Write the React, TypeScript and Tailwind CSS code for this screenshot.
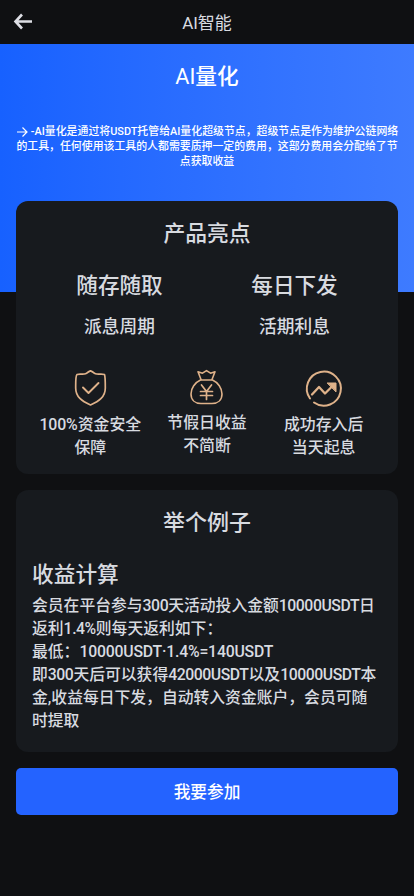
import type { ReactNode } from "react";

const highlights = [
  { title: "随存随取", sub: "派息周期" },
  { title: "每日下发", sub: "活期利息" },
];

// Latin letters and digits sit a little tighter than the Chinese text
function N({ children }: { children: ReactNode }) {
  return <span className="tracking-[-0.45px]">{children}</span>;
}

function ShieldIcon() {
  return (
    <svg width="42" height="44" viewBox="0 0 42 44" fill="none" stroke="#dfb28a" strokeWidth="1.7" strokeLinecap="round" strokeLinejoin="round">
      <path d="M21.500 4.800c-1.800.4-3 2.200-5 3-2.500 1-5.500-.2-8.500.7-1.500 1.500-1.300 5.500-1.300 13.500 0 9 6.300 13.200 14.800 17 8.500-3.800 14.800-8 14.800-17 0-8-.2-12-.8-13.500-3.500-.9-6.500.3-9-.7-2-.8-3.200-2.600-5-3Z" />
      <path d="m14 21.500 5.500 5.500 10-10" strokeWidth="1.9" />
    </svg>
  );
}

function MoneyBagIcon() {
  return (
    <svg width="42" height="44" viewBox="0 0 42 44" fill="none" stroke="#dfb28a" strokeWidth="1.6" strokeLinecap="round" strokeLinejoin="round">
      <path d="m15 13.500-3-7.700 4.500 1.400 4-2.600 4 2.600L29 5.800l-3 7.700" />
      <path d="M14.500 14h12C32 16.500 36 22 36 28c0 6-4 9.500-10 9.500H15c-6 0-10-3.500-10-9.500 0-6 4-11.500 9.500-14Z" />
      <path d="m15.500 19 5 6.500 5-6.500M20.500 25.500v8M14.500 25.500h12M14.500 29.500h12" strokeWidth="1.7" />
    </svg>
  );
}

function TrendIcon() {
  return (
    <svg width="44" height="44" viewBox="0 0 44 44" fill="none" stroke="#dfb28a" strokeWidth="2" strokeLinecap="round" strokeLinejoin="round">
      <path d="M8 32.500A17 17 0 1 1 12 36.500" />
      <path d="m10 28.500 7-7.500 6 6.500 8-8" strokeWidth="2.3" />
      <path d="M25.500 17H34v8.500Z" fill="#dfb28a" strokeWidth="1" />
    </svg>
  );
}

export default function App() {
  return (
    <main className="min-h-[896px] bg-[#0f1012] font-[Roboto,'Noto_Sans_CJK_SC',sans-serif] font-medium text-[#d8dbe0]">
      <header className="grid h-11 grid-cols-[44px_1fr_44px] items-center">
        <svg className="ml-3" width="22" height="22" viewBox="0 0 22 22" fill="none" stroke="#dedfe5" strokeWidth="2.6">
          <path d="m10 3.500-6.500 7 6.500 7M3.500 10.500H20" />
        </svg>
        <h1 className="pt-1 text-center text-[17px] font-normal">AI智能</h1>
      </header>

      <section className="h-[248px] bg-linear-to-r from-[#1761ff] to-[#3e7bff] pt-[17px] text-center text-white">
        <h2 className="text-[21.7px] leading-8"><span className="font-normal">AI</span>量化</h2>
        <div className="mt-[31px] text-[10.9px] leading-[15px] whitespace-nowrap">
          <p>
            <svg className="mr-0.5 inline-block align-[-3px]" width="13" height="12" viewBox="0 0 13 12" fill="none" stroke="currentColor" strokeWidth="1.2">
              <path d="M1 6h10M6.500 1.500 11 6l-4.500 4.500" />
            </svg>
            -AI量化是通过将USDT托管给AI量化超级节点，超级节点是作为维护公链网络
          </p>
          <p>的工具，任何使用该工具的人都需要质押一定的费用，这部分费用会分配给了节</p>
          <p>点获取收益</p>
        </div>
      </section>

      <div className="-mt-[91px] px-4">
        <section className="h-[273px] rounded-xl bg-[#171a1e] pt-[17px] text-center">
          <h2 className="text-[21.8px] leading-8">产品亮点</h2>
          <div className="mt-5 grid grid-cols-2 px-4">
            {highlights.map((item) => (
              <div key={item.title}>
                <p className="text-[21.6px] leading-8">{item.title}</p>
                <p className="mt-[11px] text-[17.7px] leading-7">{item.sub}</p>
              </div>
            ))}
          </div>
          <div className="mt-[25px] grid grid-cols-3 px-4 text-[15.9px] leading-[23px]">
            <div className="flex flex-col items-center">
              <ShieldIcon />
              <p className="mt-[3px]"><span className="tracking-[-0.15px]">100%</span>资金安全<br />保障</p>
            </div>
            <div className="flex flex-col items-center">
              <MoneyBagIcon />
              <p className="mt-px">节假日收益<br />不简断</p>
            </div>
            <div className="flex flex-col items-center">
              <TrendIcon />
              <p className="mt-[3px]">成功存入后<br />当天起息</p>
            </div>
          </div>
        </section>

        <section className="mt-4 h-[262px] rounded-xl bg-[#171a1e] px-4 pt-[17px]">
          <h2 className="text-center text-[22px] leading-8">举个例子</h2>
          <h3 className="mt-5 text-[21.7px] leading-8">收益计算</h3>
          <div className="mt-[3px] text-[15.8px] leading-[23px] whitespace-nowrap">
            <p>会员在平台参与<N>300</N>天活动投入金额<N>10000USDT</N>日</p>
            <p>返利<N>1.4%</N>则每天返利如下：</p>
            <p>最低：<span className="tracking-[-0.2px]">10000USDT·1.4%=140USDT</span></p>
            <p>即<N>300</N>天后可以获得<N>42000USDT</N>以及<N>10000USDT</N>本</p>
            <p>金,收益每日下发，自动转入资金账户，会员可随</p>
            <p>时提取</p>
          </div>
        </section>

        <button className="mt-4 h-[47px] w-full rounded-[5px] bg-[#2463ff] pt-0.5 text-[16.7px] text-white">我要参加</button>
      </div>
    </main>
  );
}
